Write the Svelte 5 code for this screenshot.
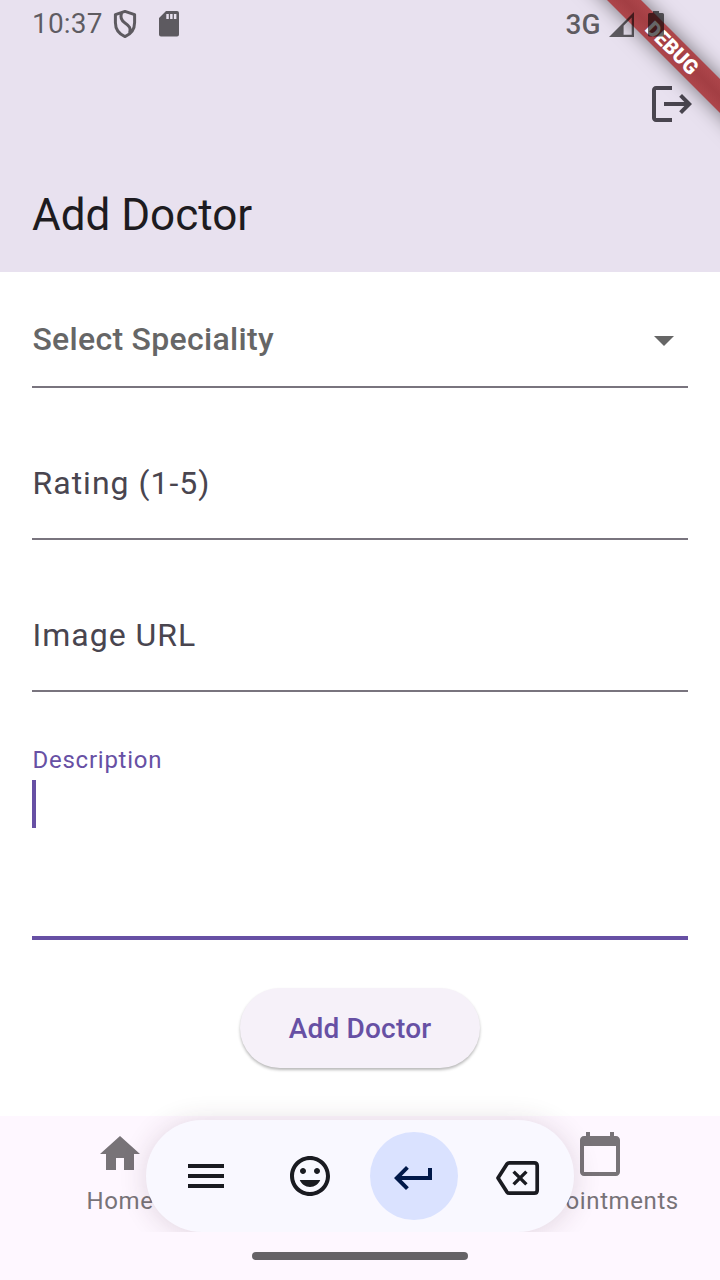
<script>
  const fields = ['Rating (1-5)', 'Image URL'];
</script>

<div class="screen">
  <header>
    <div class="ribbon">DEBUG</div>
    <div class="status">
      <span class="clock">10:37</span>
      <svg class="shield" width="24" height="30" viewBox="0 0 24 30" fill="none" stroke="currentColor" stroke-width="3" stroke-linejoin="round">
        <path d="M12 2.4L21.6 5.6V13.5C21.6 20 18 25 12 27.6C6 25 2.4 20 2.4 13.5V5.6ZM8.6 3.8C7 8.5 7.8 11.3 12 14C16.8 17.2 18 19.4 16.6 24" />
      </svg>
      <svg class="sd" width="20" height="26" viewBox="0 0 20 26">
        <path fill="currentColor" fill-rule="evenodd" d="M7 0H18Q20 0 20 2V23.5Q20 25.5 18 25.5H2Q0 25.5 0 23.5V7ZM7.3 3V8H9.8V3ZM11.1 3V8H13.6V3ZM14.9 3V8H17.4V3Z" />
      </svg>
      <span class="network">3G</span>
      <svg class="signal" width="25" height="25" viewBox="0 0 25 25">
        <path fill="currentColor" fill-rule="evenodd" d="M25 0V25H0ZM22.7 5.6L14.6 13.8V22.7H22.7Z" />
      </svg>
      <svg class="battery" width="16" height="26" viewBox="0 0 16 26">
        <path fill="currentColor" d="M5 0H11V2H14.5Q16 2 16 3.5V24Q16 25.6 14.5 25.6H1.5Q0 25.6 0 24V3.5Q0 2 1.5 2H5Z" />
      </svg>
    </div>
    <div class="actions">
      <svg width="48" height="48" viewBox="0 0 24 24" fill="currentColor"><path d="M17 7l-1.41 1.41L18.17 11H8v2h10.17l-2.58 2.58L17 17l5-5zM4 5h8V3H4c-1.1 0-2 .9-2 2v14c0 1.1.9 2 2 2h8v-2H4V5z" /></svg>
    </div>
    <h1>Add Doctor</h1>
  </header>

  <main>
    <div class="select">
      <span>Select Speciality</span>
      <svg width="48" height="48" viewBox="0 0 24 24" fill="currentColor"><path d="M7 10l5 5 5-5z" /></svg>
    </div>
    {#each fields as field}
      <div class="field">{field}</div>
    {/each}
    <div class="description">
      <span>Description</span>
      <div class="caret"></div>
    </div>
    <button>Add Doctor</button>
  </main>

  <nav>
    <div class="tab">
      <svg width="48" height="48" viewBox="0 0 24 24" fill="currentColor"><path d="M10 20v-6h4v6h5v-8h3L12 3 2 12h3v8z" /></svg>
      <span>Home</span>
    </div>
    <div class="tab"></div>
    <div class="tab">
      <svg width="48" height="48" viewBox="0 0 24 24" fill="currentColor"><path d="M20 3h-1V1h-2v2H7V1H5v2H4c-1.1 0-2 .9-2 2v16c0 1.1.9 2 2 2h16c1.1 0 2-.9 2-2V5c0-1.1-.9-2-2-2zm0 18H4V8h16v13z" /></svg>
      <span>Appointments</span>
    </div>
  </nav>

  <div class="toolbar-layer">
    <div class="toolbar">
      <div class="key">
        <svg width="48" height="48" viewBox="0 0 24 24" fill="currentColor"><path d="M3 18h18v-2H3v2zm0-5h18v-2H3v2zm0-7v2h18V6H3z" /></svg>
      </div>
      <div class="key">
        <svg width="48" height="48" viewBox="0 0 24 24" fill="currentColor"><path d="M11.99 2C6.47 2 2 6.48 2 12s4.47 10 9.99 10C17.52 22 22 17.52 22 12S17.52 2 11.99 2zM12 20c-4.42 0-8-3.58-8-8s3.58-8 8-8 8 3.58 8 8-3.58 8-8 8zm3.5-9c.83 0 1.5-.67 1.5-1.5S16.33 8 15.5 8 14 8.67 14 9.5s.67 1.5 1.5 1.5zm-7 0c.83 0 1.5-.67 1.5-1.5S9.33 8 8.5 8 7 8.67 7 9.5 7.67 11 8.5 11zm3.5 6.5c2.33 0 4.31-1.46 5.11-3.5H6.89c.8 2.04 2.78 3.5 5.11 3.5z" /></svg>
      </div>
      <div class="key active">
        <svg width="48" height="48" viewBox="0 -1 24 24" fill="currentColor"><path d="M19 7v4H5.83l3.58-3.59L8 6l-6 6 6 6 1.41-1.41L5.83 13H21V7z" /></svg>
      </div>
      <div class="key">
        <svg width="48" height="48" viewBox="0 0 48 48" fill="none" stroke="currentColor" stroke-width="3.7" stroke-linejoin="round">
          <path d="M15.4 10.8H40.2Q43.2 10.8 43.2 13.8V38.2Q43.2 41.2 40.2 41.2H15.4Q13.8 41.2 12.8 39.8L4 26L12.8 12.2Q13.8 10.8 15.4 10.8Z" />
          <path d="M19.6 19.6L32.4 32.4M32.4 19.6L19.6 32.4" stroke-width="3.4" />
        </svg>
      </div>
    </div>
  </div>
  <div class="gesture"></div>
</div>

<style>
  :global(body) { background: #fff; }
  .screen { position: relative; width: 720px; height: 1280px; display: flex; flex-direction: column; overflow: hidden; font-family: Roboto, sans-serif; background: #fff; }
  svg { display: block; flex: none; }

  header { position: relative; height: 272px; background: #e8e1ef; overflow: hidden; }
  .ribbon { position: absolute; left: 552px; top: 36px; width: 240px; height: 24px; transform: rotate(45deg); background: linear-gradient(#ad464b, #a33e43 50%, #ad464b); box-shadow: 0 0 20px rgba(0, 0, 0, .5); color: #fff; font-size: 20.4px; font-weight: 900; line-height: 24px; text-align: center; }
  .status { position: relative; height: 47px; display: flex; align-items: flex-start; padding: 0 56px 0 32px; color: rgba(0, 0, 0, .6); font-size: 28px; line-height: 47px; }
  .clock { width: 81px; letter-spacing: .2px; }
  .shield { margin-top: 9px; }
  .sd { margin: 11px auto 0 22px; }
  .network { font-weight: 500; line-height: 49px; letter-spacing: .3px; }
  .signal { margin: 12px 14px 0 8px; }
  .battery { margin-top: 11px; }
  .actions { display: flex; justify-content: flex-end; padding: 33px 24px 0; color: #49454f; }
  h1 { margin: 59px 0 0 32px; font-size: 44px; font-weight: 400; line-height: 56px; color: #1d1b20; }

  main { flex: 1; display: flex; flex-direction: column; padding: 0 32px; font-size: 32px; }
  main > * { box-sizing: border-box; }
  .select { display: flex; align-items: center; justify-content: space-between; height: 116px; padding-top: 22px; border-bottom: 2px solid #79747e; color: #666; font-weight: 500; }
  .select span { line-height: 36px; margin-bottom: 2px; padding-left: .4px; letter-spacing: .3px; }
  .field { display: flex; align-items: center; height: 152px; padding: 40px 0 0 .5px; border-bottom: 2px solid #79747e; color: #49454f; letter-spacing: 1px; background: linear-gradient(#fff, #fff); }
  .description { height: 248px; padding-top: 54px; border-bottom: 4px solid #6750a4; color: #6750a4; font-size: 24px; line-height: 28px; letter-spacing: .75px; }
  .description span { display: block; padding-left: .5px; }
  .caret { width: 4px; height: 48px; margin-top: 6px; background: #6750a4; }
  button { align-self: center; width: 240px; height: 80px; margin-top: 48px; padding: 2px 0 0; border: 0; border-radius: 40px; background: #f6f1f9; box-shadow: 0 2px 3px rgba(0, 0, 0, .28); color: #6750a4; font: 500 28px/32px Roboto, sans-serif; letter-spacing: .2px; }

  nav { height: 164px; display: grid; grid-template-columns: repeat(3, 1fr); background: #fef7ff; color: #787378; }
  .tab { display: flex; flex-direction: column; align-items: center; gap: 9px; padding-top: 14px; font-size: 24px; line-height: 28px; letter-spacing: .6px; }

  .toolbar-layer { position: absolute; left: 0; top: 1080px; width: 720px; height: 152px; overflow: hidden; }
  .toolbar { display: flex; align-items: center; gap: 16px; box-sizing: border-box; width: 428px; height: 112px; margin: 40px 0 0 146px; padding-left: 16px; border-radius: 56px; background: #f9f8ff; box-shadow: 0 2px 28px rgba(60, 30, 50, .16); color: #1a1b21; }
  .key { display: grid; place-items: center; width: 88px; height: 88px; border-radius: 50%; }
  .active { background: #dae2ff; color: #001849; }
  .gesture { position: absolute; left: 252px; top: 1252px; width: 216px; height: 8px; border-radius: 4px; background: #656266; }
</style>
